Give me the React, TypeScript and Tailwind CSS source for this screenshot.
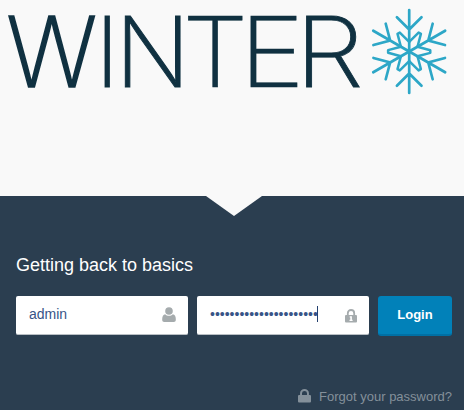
import React from "react";

const letters = [
  { c: "W", x: 6.3, sx: 0.985, weight: 1.7 },
  { c: "I", x: 94.8, sx: 1, weight: 0.8 },
  { c: "N", x: 115, sx: 1.01, weight: 1 },
  { c: "T", x: 182.2, sx: 1.08, weight: 0.6 },
  { c: "E", x: 239.3, sx: 1.14, weight: 0.6 },
  { c: "R", x: 295.1, sx: 1.13, weight: 0.8 },
];

function Logo() {
  return (
    <svg width="464" height="104" viewBox="0 0 464 104" className="block" aria-label="Winter">
      <g fill="#103141" stroke="#103141" fontFamily="Inter, sans-serif" fontWeight="200" fontSize="97.5">
        {letters.map((l) => (
          <text key={l.c} strokeWidth={l.weight} transform={`translate(${l.x} 87.1) scale(${l.sx} 1)`}>
            {l.c}
          </text>
        ))}
      </g>
      <g transform="translate(409.2 51.5)" fill="none" stroke="#2da7c7" strokeWidth="2.7" strokeLinecap="round">
        {[0, 60, 120, 180, 240, 300].map((a) => (
          <g key={a} transform={`rotate(${a})`}>
            <path d="M0 0V-41.5M-12.3-34.2L0-22L12.3-34.2" />
            <path d="M0-9.6L9.4-18.9L11.7-17.6L8.3-4.8" strokeWidth="2.5" strokeLinejoin="round" />
          </g>
        ))}
      </g>
    </svg>
  );
}

function UserIcon() {
  return (
    <svg width="14" height="16" viewBox="0 0 14 16" fill="#a5abad" className="block">
      <circle cx="7" cy="4" r="3.8" />
      <path d="M3.2 7.2C4.2 8.2 5.5 8.8 7 8.8s2.8-.6 3.8-1.6c2 .4 3 2.2 3 4.7v1.2c0 1.2-.8 2-2 2H2.2c-1.2 0-2-.8-2-2v-1.2c0-2.5 1-4.3 3-4.7z" />
    </svg>
  );
}

function LockIcon({ keyhole = false }: { keyhole?: boolean }) {
  return (
    <svg width={keyhole ? 12 : 13} height="14" viewBox="0 0 12 14" preserveAspectRatio="none" className="block">
      <path d="M2.8 6.5V4.2a3.2 3.2 0 0 1 6.4 0V6.5" fill="none" stroke="currentColor" strokeWidth="1.8" />
      <rect y="6" width="12" height="7.6" rx="1" fill="currentColor" />
      {keyhole && <path d="M4.7 7.3h2.2v3.5h.7v1.2H4.5v-1.2h.8V8.5h-.6z" fill="#fff" />}
    </svg>
  );
}

export default function App() {
  return (
    <div className="flex h-[410px] w-[464px] flex-col overflow-hidden bg-[#f9f9f9] font-['Liberation_Sans',Arial,sans-serif]">
      <header className="h-[196px] shrink-0">
        <Logo />
      </header>
      <main className="flex flex-1 flex-col bg-[#2b3e50]">
        <svg width="56" height="20" viewBox="0 0 56 20" className="ml-[206px] block shrink-0">
          <path d="M0 0H56L28 20z" fill="#f9f9f9" />
        </svg>
        <h1 className="mt-[35px] ml-4 text-[18px] leading-7 text-white">Getting back to basics</h1>
        <form className="mt-[17px] flex pr-3 pl-4" onSubmit={(e) => e.preventDefault()}>
          <div className="flex h-[39px] w-[172px] justify-between rounded-[2px] border-b border-[#b9bfc4] bg-white pr-3 pl-[13px]">
            <span className="pt-2 text-[14px] leading-5 text-[#385487]">admin</span>
            <span className="pt-[11px]"><UserIcon /></span>
          </div>
          <div className="ml-[9px] flex h-[39px] w-[172px] justify-between rounded-[2px] border-b border-[#b9bfc4] bg-white pr-[12.5px] pl-[13px]">
            <div className="flex pt-2 text-[14px] leading-5 text-[#385487]">
              <span>••••••••••••••••••••••</span>
              <span className="-ml-px mt-[2px] h-4 w-px bg-[#24406f]" />
            </div>
            <span className="pt-[12.5px] text-[#a5abad]"><LockIcon keyhole /></span>
          </div>
          <button className="ml-[9px] h-10 w-[74px] rounded-[3px] border-b-2 border-[#0070a5] bg-[#0181b9] text-[13px] font-bold text-white">Login</button>
        </form>
        <a className="mt-[51px] flex items-center justify-end gap-2 pr-3 text-[13px] leading-5 text-[#84909a]">
          <span className="-mt-[2px]"><LockIcon /></span>
          <span>Forgot your password?</span>
        </a>
      </main>
    </div>
  );
}
